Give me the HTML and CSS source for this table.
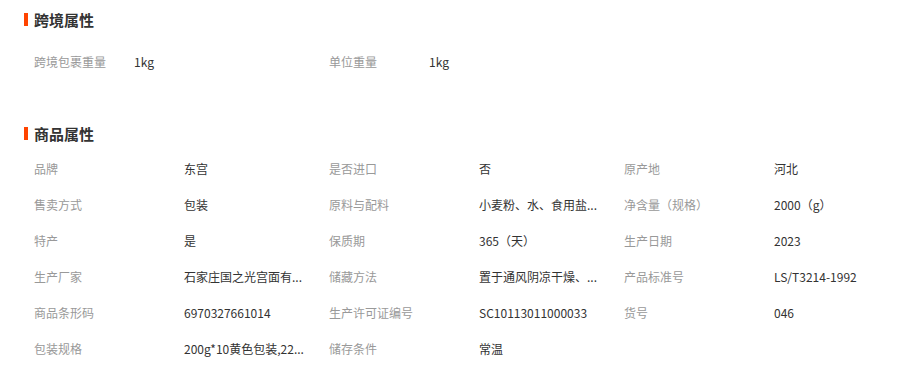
FILE: index.html
```html
<!DOCTYPE html>
<html lang="zh">
<head>
<meta charset="utf-8">
<link rel="stylesheet" href="styles.css">
</head>
<body>
<section class="section section-cross">
  <h2 class="section-title">跨境属性</h2>
  <div class="props props-cross">
    <div class="prop"><span class="label">跨境包裹重量</span><span class="value">1kg</span></div>
    <div class="prop"><span class="label">单位重量</span><span class="value">1kg</span></div>
  </div>
</section>
<section class="section section-goods">
  <h2 class="section-title">商品属性</h2>
  <div class="props props-goods">
    <div class="prop"><span class="label">品牌</span><span class="value">东宫</span></div>
    <div class="prop"><span class="label">是否进口</span><span class="value">否</span></div>
    <div class="prop"><span class="label">原产地</span><span class="value">河北</span></div>
    <div class="prop"><span class="label">售卖方式</span><span class="value">包装</span></div>
    <div class="prop"><span class="label">原料与配料</span><span class="value" title="小麦粉、水、食用盐、碳酸钠">小麦粉、水、食用盐...</span></div>
    <div class="prop"><span class="label">净含量（规格）</span><span class="value">2000（g）</span></div>
    <div class="prop"><span class="label">特产</span><span class="value">是</span></div>
    <div class="prop"><span class="label">保质期</span><span class="value">365（天）</span></div>
    <div class="prop"><span class="label">生产日期</span><span class="value">2023</span></div>
    <div class="prop"><span class="label">生产厂家</span><span class="value" title="石家庄国之光宫面有限公司">石家庄国之光宫面有...</span></div>
    <div class="prop"><span class="label">储藏方法</span><span class="value" title="置于通风阴凉干燥、避光处">置于通风阴凉干燥、...</span></div>
    <div class="prop"><span class="label">产品标准号</span><span class="value">LS/T3214-1992</span></div>
    <div class="prop"><span class="label">商品条形码</span><span class="value">6970327661014</span></div>
    <div class="prop"><span class="label">生产许可证编号</span><span class="value">SC10113011000033</span></div>
    <div class="prop"><span class="label">货号</span><span class="value">046</span></div>
    <div class="prop"><span class="label">包装规格</span><span class="value" title="200g*10黄色包装,2200g">200g*10黄色包装,22...</span></div>
    <div class="prop"><span class="label">储存条件</span><span class="value">常温</span></div>
  </div>
</section>
</body>
</html>
```

FILE: styles.css
```css
html, body {
  margin: 0;
  padding: 0;
  background: #fff;
}
body {
  font-family: "Microsoft YaHei", "Noto Sans CJK SC", "Liberation Sans", sans-serif;
  font-size: 12px;
  color: #333;
}
.section-cross {
  padding-top: 7px;
}
.section-goods {
  margin-top: 41px;
}
.section-title {
  margin: 0;
  height: 24px;
  display: flex;
  align-items: center;
  padding-left: 24px;
  font-size: 15px;
  font-weight: bold;
  color: #333;
}
.section-title::before {
  content: "";
  width: 4px;
  height: 13px;
  background: #ff4400;
  margin-right: 6px;
}
.props {
  display: grid;
  grid-template-columns: 295px 295px 295px;
  padding-left: 34px;
}
.props-cross {
  margin-top: 13px;
}
.props-goods {
  margin-top: 6px;
}
.prop {
  display: flex;
  align-items: center;
  height: 36px;
  line-height: 36px;
  white-space: nowrap;
}
.label {
  color: #999;
  width: 150px;
  flex: none;
}
.props-cross .label {
  width: 100px;
}
.value {
  color: #333;
}
```
